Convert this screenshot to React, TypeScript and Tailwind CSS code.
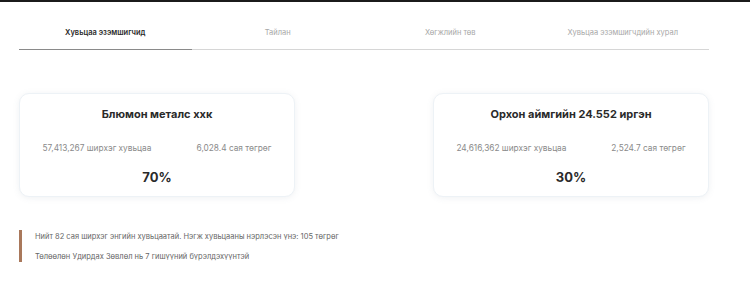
import React from "react";

const tabs = [
  "Хувьцаа эзэмшигчид",
  "Тайлан",
  "Хөгжлийн төв",
  "Хувьцаа эзэмшигчдийн хурал",
];

const holders = [
  {
    name: "Блюмон металс ххк",
    shares: "57,413,267 ширхэг хувьцаа",
    value: "6,028.4 сая төгрөг",
    percent: "70%",
  },
  {
    name: "Орхон аймгийн 24.552 иргэн",
    shares: "24,616,362 ширхэг хувьцаа",
    value: "2,524.7 сая төгрөг",
    percent: "30%",
  },
];

function HolderCard({ name, shares, value, percent }: (typeof holders)[number]) {
  return (
    <div className="w-[276px] h-[104px] rounded-[10px] border border-[#edf2f6] bg-white shadow-[0_1px_6px_rgba(120,140,160,0.12)] flex flex-col items-center">
      <h3 className="mt-[14px] text-[11px] leading-[12px] font-bold text-[#2a2a2a]">
        {name}
      </h3>
      <div className="mt-[23px] w-full flex justify-around text-[8.3px] leading-[10px] text-[#8a8a8a]">
        <span>{shares}</span>
        <span>{value}</span>
      </div>
      <div className="mt-[16px] text-[13px] leading-[16px] font-bold text-[#2a2a2a]">
        {percent}
      </div>
    </div>
  );
}

export default function App() {
  return (
    <div className="w-[750px] h-[284px] bg-white overflow-hidden font-['Inter',sans-serif]">
      <div className="h-[2px] bg-[#1b1b1b]" />
      <div className="ml-[19px] w-[690px]">
        {/* tabs */}
        <div className="grid grid-cols-4">
          {tabs.map((tab, i) => (
            <div
              key={tab}
              className={
                i === 0
                  ? "pt-[26px] pb-[11px] text-center text-[7.5px] leading-[10px] font-semibold text-[#2a2a2a] border-b border-[#8a8a8a]"
                  : "pt-[26px] pb-[11px] text-center text-[7.5px] leading-[10px] text-[#a8a8a8] border-b border-[#d6d6d6]"
              }
            >
              {tab}
            </div>
          ))}
        </div>

        <div className="mt-[43px] flex justify-between">
          {holders.map((h) => (
            <HolderCard key={h.name} {...h} />
          ))}
        </div>

        <div className="mt-[33px] h-[32px] border-l-[3px] border-[#a9785b] pl-[13px] pt-[2px] flex flex-col gap-[10px] text-[7.5px] leading-[10px] text-[#666]">
          <p>Нийт 82 сая ширхэг энгийн хувьцаатай. Нэгж хувьцааны нэрлэсэн үнэ: 105 төгрөг</p>
          <p>Төлөөлөн Удирдах Зөвлөл нь 7 гишүүний бүрэлдэхүүнтэй</p>
        </div>
      </div>
    </div>
  );
}
